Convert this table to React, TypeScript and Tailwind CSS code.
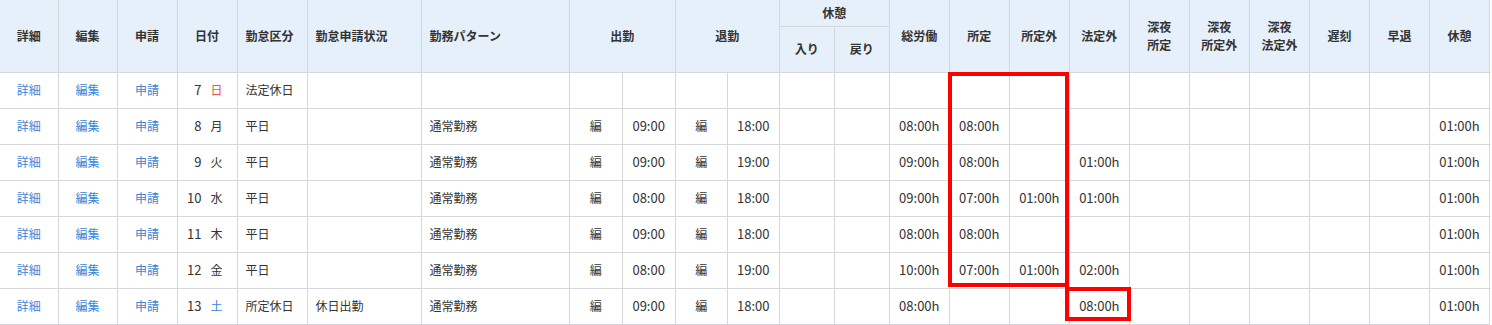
type Row = {
  day: number;
  dow: string;
  dowTone?: "sun" | "sat";
  kubun: string;
  status?: string;
  pattern?: string;
  inTime?: string;
  outTime?: string;
  total?: string;
  shotei?: string;
  shoteiGai?: string;
  hoteiGai?: string;
  kyukei?: string;
};

const rows: Row[] = [
  { day: 7, dow: "日", dowTone: "sun", kubun: "法定休日" },
  { day: 8, dow: "月", kubun: "平日", pattern: "通常勤務", inTime: "09:00", outTime: "18:00", total: "08:00h", shotei: "08:00h", kyukei: "01:00h" },
  { day: 9, dow: "火", kubun: "平日", pattern: "通常勤務", inTime: "09:00", outTime: "19:00", total: "09:00h", shotei: "08:00h", hoteiGai: "01:00h", kyukei: "01:00h" },
  { day: 10, dow: "水", kubun: "平日", pattern: "通常勤務", inTime: "08:00", outTime: "18:00", total: "09:00h", shotei: "07:00h", shoteiGai: "01:00h", hoteiGai: "01:00h", kyukei: "01:00h" },
  { day: 11, dow: "木", kubun: "平日", pattern: "通常勤務", inTime: "09:00", outTime: "18:00", total: "08:00h", shotei: "08:00h", kyukei: "01:00h" },
  { day: 12, dow: "金", kubun: "平日", pattern: "通常勤務", inTime: "08:00", outTime: "19:00", total: "10:00h", shotei: "07:00h", shoteiGai: "01:00h", hoteiGai: "02:00h", kyukei: "01:00h" },
  { day: 13, dow: "土", dowTone: "sat", kubun: "所定休日", status: "休日出勤", pattern: "通常勤務", inTime: "09:00", outTime: "18:00", total: "08:00h", hoteiGai: "08:00h", kyukei: "01:00h" },
];

// leaf column widths, left to right
const colWidths = [58, 59, 60, 60, 70, 114, 148, 53, 53, 52, 52, 55, 55, 60, 60, 60, 60, 60, 60, 60, 60, 60, 60];

const th = "border border-t-0 border-[#d3d7de] bg-[#e6f0fa] text-[12px] font-bold text-[#333] px-1";
const td = "border border-[#d5d7dc] text-[12px] text-[#333] px-1";
const num = "text-[13px]";

export default function App() {
  return (
    <div className="min-h-[325px] w-[1492px] bg-white font-['Noto_Sans_CJK_JP','Noto_Sans',sans-serif]">
      <div className="relative w-[1490px]">
        <table className="w-[1490px] table-fixed border-collapse">
          <colgroup>
            {colWidths.map((w, i) => (
              <col key={i} style={{ width: w }} />
            ))}
          </colgroup>
          <thead>
            <tr className="h-[26px]">
              <th rowSpan={2} className={`${th} border-l-0 text-center`}>詳細</th>
              <th rowSpan={2} className={`${th} text-center`}>編集</th>
              <th rowSpan={2} className={`${th} text-center`}>申請</th>
              <th rowSpan={2} className={`${th} text-center`}>日付</th>
              <th rowSpan={2} className={`${th} pl-2 text-left`}>勤怠区分</th>
              <th rowSpan={2} className={`${th} pl-2 text-left`}>勤怠申請状況</th>
              <th rowSpan={2} className={`${th} pl-2 text-left`}>勤務パターン</th>
              <th rowSpan={2} colSpan={2} className={`${th} text-center`}>出勤</th>
              <th rowSpan={2} colSpan={2} className={`${th} text-center`}>退勤</th>
              <th colSpan={2} className={`${th} text-center`}>休憩</th>
              <th rowSpan={2} className={`${th} text-center`}>総労働</th>
              <th rowSpan={2} className={`${th} text-center`}>所定</th>
              <th rowSpan={2} className={`${th} text-center`}>所定外</th>
              <th rowSpan={2} className={`${th} text-center`}>法定外</th>
              <th rowSpan={2} className={`${th} text-center leading-[18px]`}>深夜<br />所定</th>
              <th rowSpan={2} className={`${th} text-center leading-[18px]`}>深夜<br />所定外</th>
              <th rowSpan={2} className={`${th} text-center leading-[18px]`}>深夜<br />法定外</th>
              <th rowSpan={2} className={`${th} text-center`}>遅刻</th>
              <th rowSpan={2} className={`${th} text-center`}>早退</th>
              <th rowSpan={2} className={`${th} text-center`}>休憩</th>
            </tr>
            <tr className="h-[46px]">
              <th className={`${th} border-t text-center`}>入り</th>
              <th className={`${th} border-t text-center`}>戻り</th>
            </tr>
          </thead>
          <tbody>
            {rows.map((r) => (
              <tr key={r.day} className="h-[36px]">
                <td className={`${td} border-l-0 text-center`}><a className="text-[#3b86d6]">詳細</a></td>
                <td className={`${td} text-center`}><a className="text-[#3b86d6]">編集</a></td>
                <td className={`${td} text-center`}><a className="text-[#3b86d6]">申請</a></td>
                <td className={`${td} pl-2`}>
                  <div className="flex items-center">
                    <span className={`${num} w-[16px] text-right`}>{r.day}</span>
                    <span
                      className={`ml-[9px] ${
                        r.dowTone === "sun" ? "text-[#e5534b]" : r.dowTone === "sat" ? "text-[#3b86d6]" : ""
                      }`}
                    >
                      {r.dow}
                    </span>
                  </div>
                </td>
                <td className={`${td} pl-2`}>{r.kubun}</td>
                <td className={`${td} pl-2`}>{r.status ?? ""}</td>
                <td className={`${td} pl-2`}>{r.pattern ?? ""}</td>
                <td className={`${td} text-center`}>{r.inTime ? "編" : ""}</td>
                <td className={`${td} ${num} text-center`}>{r.inTime ?? ""}</td>
                <td className={`${td} text-center`}>{r.outTime ? "編" : ""}</td>
                <td className={`${td} ${num} text-center`}>{r.outTime ?? ""}</td>
                <td className={td}></td>
                <td className={td}></td>
                <td className={`${td} ${num} text-center`}>{r.total ?? ""}</td>
                <td className={`${td} ${num} text-center`}>{r.shotei ?? ""}</td>
                <td className={`${td} ${num} text-center`}>{r.shoteiGai ?? ""}</td>
                <td className={`${td} ${num} text-center`}>{r.hoteiGai ?? ""}</td>
                <td className={td}></td>
                <td className={td}></td>
                <td className={td}></td>
                <td className={td}></td>
                <td className={td}></td>
                <td className={`${td} ${num} text-center`}>{r.kyukei ?? ""}</td>
              </tr>
            ))}
          </tbody>
        </table>

        {/* highlight frames drawn over the grid */}
        <div className="pointer-events-none absolute left-[948px] top-[72px] h-[215px] w-[121px] border-4 border-[#ff0000]" />
        <div className="pointer-events-none absolute left-[1065px] top-[287px] h-[34px] w-[66px] border-4 border-[#ff0000]" />
      </div>
    </div>
  );
}
